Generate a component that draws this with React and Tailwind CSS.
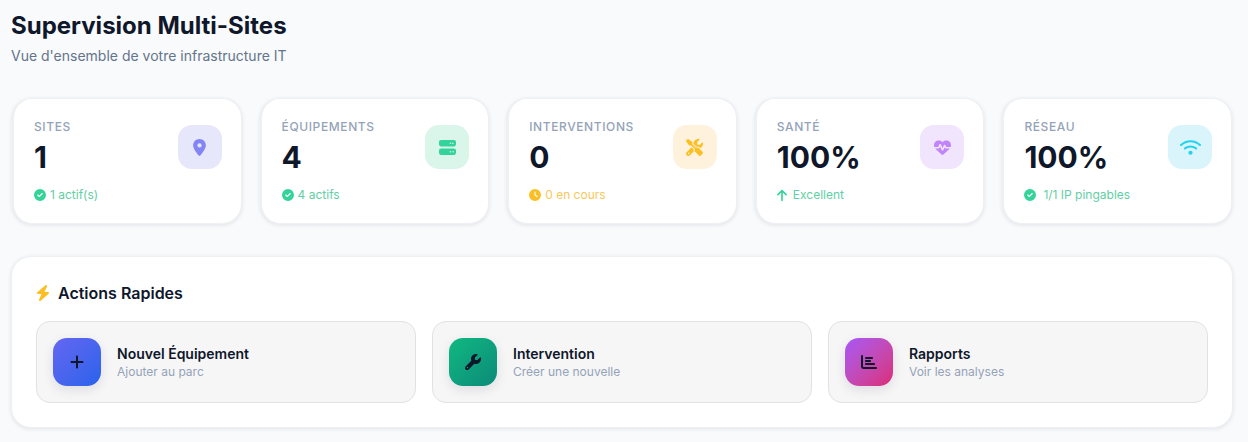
import React from 'react'
import {
  FaLocationDot,
  FaServer,
  FaScrewdriverWrench,
  FaHeartPulse,
  FaWifi,
  FaCircleCheck,
  FaClock,
  FaArrowUp,
  FaPlus,
  FaWrench,
  FaChartBar,
  FaBolt,
} from 'react-icons/fa6'

const stats = [
  { label: 'Sites', value: '1', note: '1 actif(s)', Icon: FaLocationDot, iconSize: 'w-[13px] h-[17px]', iconBox: 'bg-[#e7e7fc] text-[#8385f5]', noteColor: 'text-[#5fcfa4]', NoteIcon: FaCircleCheck, noteIconColor: 'text-[#34d399]', noteGap: 'gap-1', noteIconSize: 'w-3 h-3' },
  { label: 'Équipements', value: '4', note: '4 actifs', Icon: FaServer, iconSize: 'w-[17px] h-[17px]', iconBox: 'bg-[#daf5ea] text-[#34d399]', noteColor: 'text-[#5fcfa4]', NoteIcon: FaCircleCheck, noteIconColor: 'text-[#34d399]', noteGap: 'gap-1', noteIconSize: 'w-3 h-3' },
  { label: 'Interventions', value: '0', note: '0 en cours', Icon: FaScrewdriverWrench, iconSize: 'w-[17px] h-[17px]', iconBox: 'bg-[#fef2dc] text-[#fbbf24]', noteColor: 'text-[#f8c85a]', NoteIcon: FaClock, noteIconColor: 'text-[#fbbf24]', noteGap: 'gap-1', noteIconSize: 'w-3 h-3' },
  { label: 'Santé', value: '100%', note: 'Excellent', Icon: FaHeartPulse, iconSize: 'w-[17px] h-[17px]', iconBox: 'bg-[#f1e4fd] text-[#c084fc]', noteColor: 'text-[#5fcfa4]', NoteIcon: FaArrowUp, noteIconColor: 'text-[#34d399]', noteGap: 'gap-[6px]', noteIconSize: 'w-[10px] h-[13px]' },
  { label: 'Réseau', value: '100%', note: '1/1 IP pingables', Icon: FaWifi, iconSize: 'w-[21px] h-[17px]', iconBox: 'bg-[#d9f4fa] text-[#22d3ee]', noteColor: 'text-[#5fcfa4]', NoteIcon: FaCircleCheck, noteIconColor: 'text-[#34d399]', noteGap: 'gap-[7px]', noteIconSize: 'w-3 h-3' },
]

const actions = [
  { title: 'Nouvel Équipement', sub: 'Ajouter au parc', Icon: FaPlus, box: 'from-[#6366f1] to-[#2563eb]' },
  { title: 'Intervention', sub: 'Créer une nouvelle', Icon: FaWrench, box: 'from-[#10b981] to-[#0d8a78]' },
  { title: 'Rapports', sub: 'Voir les analyses', Icon: FaChartBar, box: 'from-[#a855f7] to-[#db2777]' },
]

function StatCard({ stat }) {
  const { label, value, note, Icon, iconSize, iconBox, noteColor, NoteIcon, noteIconColor, noteGap, noteIconSize } = stat
  return (
    <div className="h-[126px] rounded-[20px] bg-white border border-l-2 border-[#eef0f3] shadow-[0_1px_4px_rgba(15,23,42,0.1)] pl-[20px] pr-[19px] pt-[20px] flex justify-between">
      <div>
        <div className="text-[12px] leading-[16px] font-medium uppercase tracking-[0.6px] text-[#94a3b8]">{label}</div>
        <div className="text-[30px] leading-[40px] font-bold text-[#0f172a] mt-[2px]">{value}</div>
        <div className={`flex items-center ${noteGap} mt-[10px] text-[12px] leading-[16px] ${noteColor}`}>
          <NoteIcon className={`${noteIconSize} ${noteIconColor}`} />
          <span>{note}</span>
        </div>
      </div>
      <div className={`w-11 h-11 mt-[6px] rounded-[14px] flex items-center justify-center ${iconBox}`}>
        <Icon className={iconSize} />
      </div>
    </div>
  )
}

function ActionCard({ action }) {
  const { title, sub, Icon, box } = action
  return (
    <div className="h-[82px] rounded-[14px] bg-[#f6f6f7] border border-[#e2e2e4] px-4 flex items-center gap-4">
      <div className={`w-12 h-12 rounded-[14px] bg-gradient-to-br ${box} flex items-center justify-center shadow-[0_4px_12px_rgba(15,23,42,0.1)] text-[#0f172a]`}>
        <Icon className="w-4 h-4" />
      </div>
      <div>
        <div className="text-[14px] leading-[18px] mb-px font-semibold text-[#0f172a]">{title}</div>
        <div className="text-[12px] leading-[16px] text-[#94a3b8]">{sub}</div>
      </div>
    </div>
  )
}

export default function App() {
  return (
    <div className="min-h-screen bg-[#f8fafc] pl-[11px] pr-[15px] pt-[12px] font-['Inter',sans-serif]">
      <h1 className="text-[24px] leading-[28px] font-bold text-[#0f172a]">Supervision Multi-Sites</h1>
      <p className="text-[14px] leading-[20px] text-[#64748b] mt-[6px]">Vue d'ensemble de votre infrastructure IT</p>

      <div className="grid grid-cols-5 gap-[18px] mt-[32px] mx-px">
        {stats.map((s) => (
          <StatCard key={s.label} stat={s} />
        ))}
      </div>

      <div className="mt-[32px] rounded-[20px] bg-white border border-[#eef0f3] shadow-[0_1px_4px_rgba(15,23,42,0.1)] px-6 pt-[24px] h-[172px]">
        <div className="flex items-center gap-[8px] text-[16px] leading-[24px] font-semibold text-[#0f172a]">
          <FaBolt className="w-[14px] h-4 text-[#fbbf24]" />
          <span>Actions Rapides</span>
        </div>
        <div className="grid grid-cols-3 gap-4 mt-[16px]">
          {actions.map((a) => (
            <ActionCard key={a.title} action={a} />
          ))}
        </div>
      </div>
    </div>
  )
}
